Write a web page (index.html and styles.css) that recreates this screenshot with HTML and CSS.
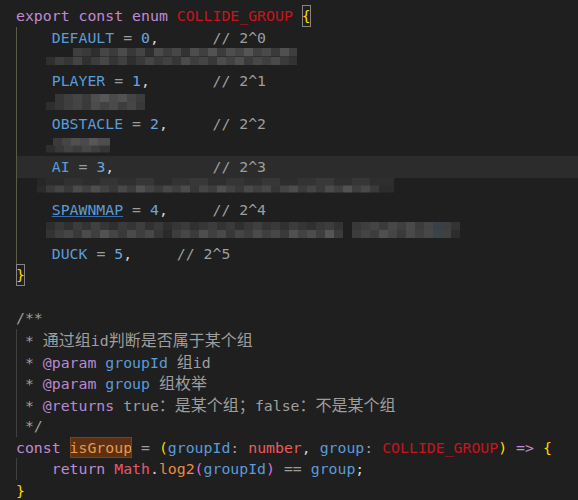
FILE: index.html
```html
<!DOCTYPE html>
<html lang="zh-CN">
<head>
<meta charset="utf-8">
<title>COLLIDE_GROUP</title>
<link rel="stylesheet" href="styles.css">
</head>
<body>
<div class="editor">
<div class="ln"><span class="kw">export</span> <span class="kw">const</span> <span class="kw">enum</span> <span class="ty">COLLIDE_GROUP</span> <span class="br1 match">{</span></div>
<div class="ln g1">    <span class="mem">DEFAULT</span> <span class="op">=</span> <span class="num">0</span><span class="pn">,</span>      <span class="cm">// 2^0</span></div>
<div class="ln g1"><div class="blur b3"></div></div>
<div class="ln g1">    <span class="mem">PLAYER</span> <span class="op">=</span> <span class="num">1</span><span class="pn">,</span>       <span class="cm">// 2^1</span></div>
<div class="ln g1"><div class="blur b5"></div></div>
<div class="ln g1">    <span class="mem">OBSTACLE</span> <span class="op">=</span> <span class="num">2</span><span class="pn">,</span>     <span class="cm">// 2^2</span></div>
<div class="ln g1"><div class="blur b7"></div></div>
<div class="ln g1 cur">    <span class="mem">AI</span> <span class="op">=</span> <span class="num">3</span><span class="pn">,</span>           <span class="cm">// 2^3</span></div>
<div class="ln g1"><div class="blur b9"></div></div>
<div class="ln g1">    <span class="mem ul">SPAWNMAP</span> <span class="op">=</span> <span class="num">4</span><span class="pn">,</span>     <span class="cm">// 2^4</span></div>
<div class="ln g1"><div class="blur b11"></div></div>
<div class="ln g1">    <span class="mem">DUCK</span> <span class="op">=</span> <span class="num">5</span><span class="pn">,</span>     <span class="cm">// 2^5</span></div>
<div class="ln"><span class="br1 match">}</span></div>
<div class="ln"></div>
<div class="ln"><span class="cm">/**</span></div>
<div class="ln g2"><span class="cm"> * <span class="cjk">通过组</span>id<span class="cjk">判断是否属于某个组</span></span></div>
<div class="ln g2"><span class="cm"> * </span><span class="tag">@param</span> <span class="par">groupId</span> <span class="cm"><span class="cjk">组</span>id</span></div>
<div class="ln g2"><span class="cm"> * </span><span class="tag">@param</span> <span class="par">group</span> <span class="cm"><span class="cjk">组枚举</span></span></div>
<div class="ln g2"><span class="cm"> * </span><span class="tag">@returns</span><span class="cm"> true<span class="cjk">：是某个组；</span>false<span class="cjk">：不是某个组</span></span></div>
<div class="ln g2"><span class="cm"> */</span></div>
<div class="ln"><span class="kw">const</span> <span class="fnhl">isGroup</span> <span class="op">=</span> <span class="br1">(</span><span class="mem">groupId</span><span class="op">:</span> <span class="tn">number</span><span class="pn">,</span> <span class="mem">group</span><span class="op">:</span> <span class="ty">COLLIDE_GROUP</span><span class="br1">)</span> <span class="kw">=&gt;</span> <span class="br1">{</span></div>
<div class="ln g2">    <span class="kw">return</span> <span class="cls">Math</span><span class="pn">.</span><span class="fn">log2</span><span class="br2">(</span><span class="mem">groupId</span><span class="br2">)</span> <span class="op">==</span> <span class="mem">group</span><span class="pn">;</span></div>
<div class="ln"><span class="br1">}</span></div>
</div>
</body>
</html>
```
FILE: styles.css
```css
html, body {
  margin: 0;
  padding: 0;
  background: #1f1f1f;
  overflow: hidden;
}

.editor {
  width: 578px;
  height: 500px;
  padding: 5px 0 0 16px;
  box-sizing: border-box;
  font-family: "DejaVu Sans Mono", "Noto Sans CJK SC", monospace;
  font-size: 14.83px;
  line-height: 21.6px;
  color: #d4d4d4;
  overflow: hidden;
}

.ln {
  display: flow-root;
  height: 21.6px;
  white-space: pre;
}

.g1 { box-shadow: inset 1px 0 0 #5b5a47; }
.g2 { box-shadow: inset 1px 0 0 #404040; }

.cur {
  background: #2c2c2c;
}

.cjk {
  font-family: "Noto Sans CJK SC", sans-serif;
  font-size: 16px;
  line-height: 21.6px;
}

.kw { color: #c08bd2; }
.ty { color: #c8141c; }
.mem { color: #5a9bd8; }
.num { color: #6aa8dc; }
.op { color: #9c9c9c; }
.pn { color: #d4d4d4; }
.cm { color: #9e9e9e; }
.tag { color: #b98ad0; }
.par { color: #5a9bd8; }
.tn { color: #ee5a5a; }
.cls { color: #e9586a; }
.fn { color: #ee8a3c; }
.br1 { color: #ffd700; }
.br2 { color: #da70d6; }

.match {
  display: inline-block;
  outline: 1px solid #858585;
  outline-offset: -1px;
}

.ul {
  text-decoration: underline;
  text-decoration-color: #3f6c9c;
  text-underline-offset: 1px;
}

.fnhl {
  color: #e39b4f;
  background: #5e3011;
  outline: 1px solid #7a4219;
  outline-offset: -1px;
  display: inline-block;
}

.blur {
  background-repeat: no-repeat;
}

.b3 {
  margin: 0 0 0 30px;
  width: 251px;
  height: 17px;
  background-image:
    linear-gradient(90deg, #3f3f3f 0 9px, #3a3a3a 9px 18px, #2e2e2e 18px 27px, #464646 27px 36px, #3b3b3b 36px 45px, #4b4b4b 45px 54px, #383838 54px 63px, #444 63px 72px, #2f2f2f 72px 81px, #4a4a4a 81px 90px, #3d3d3d 90px 99px, #474747 99px 108px, #333 108px 117px, #4d4d4d 117px 126px, #404040 126px 135px, #525252 135px 144px, #3c3c3c 144px 153px, #4e4e4e 153px 162px, #454545 162px 171px, #555 171px 180px, #414141 180px 189px, #4a4a4a 189px 198px, #3a3a3a 198px 207px, #505050 207px 216px, #3f3f3f 216px 224px),
    linear-gradient(90deg, #2f2f2f 0 9px, #3d3d3d 9px 18px, #363636 18px 27px, #444 27px 36px, #303030 36px 45px, #3c3c3c 45px 54px, #474747 54px 63px, #353535 63px 72px, #404040 72px 81px, #2e2e2e 81px 90px, #393939 90px 99px, #454545 99px 108px, #3a3a3a 108px 117px, #414141 117px 126px, #363636 126px 135px, #4b4b4b 135px 144px, #3e3e3e 144px 153px, #454545 153px 162px, #383838 162px 171px, #4c4c4c 171px 180px, #424242 180px 189px, #4f4f4f 189px 198px, #3b3b3b 198px 207px, #474747 207px 216px, #3f3f3f 216px 225px, #4a4a4a 225px 234px, #3a3a3a 234px 243px, #333 243px 251px);
  background-position: 27px 0, 0 100%;
  background-size: 224px 50%, 100% 50%;
}

.b5 {
  margin: 2.6px 0 0 30px;
  width: 99px;
  height: 16px;
  background-image:
    linear-gradient(90deg, #363636 0 9px, #3f3f3f 9px 18px, #454545 18px 27px, #3b3b3b 27px 36px, #4e4e4e 36px 45px, #575757 45px 54px, #4a4a4a 54px 63px, #525252 63px 72px, #444 72px 81px, #3c3c3c 81px 90px),
    linear-gradient(90deg, #2e2e2e 0 9px, #363636 9px 18px, #3e3e3e 18px 27px, #444 27px 36px, #3a3a3a 36px 45px, #4c4c4c 45px 54px, #424242 54px 63px, #4a4a4a 63px 72px, #3d3d3d 72px 81px, #464646 81px 90px, #383838 90px 99px);
  background-position: 9px 0, 0 100%;
  background-size: 90px 50%, 100% 50%;
}

.b7 {
  margin: 3.4px 0 0 30px;
  width: 64px;
  height: 15px;
  background-image:
    linear-gradient(90deg, #3a3a3a 0 9px, #454545 9px 18px, #505050 18px 27px, #4a4a4a 27px 36px, #575757 36px 45px, #4e4e4e 45px 57px),
    linear-gradient(90deg, #2e2e2e 0 9px, #383838 9px 18px, #424242 18px 27px, #3c3c3c 27px 36px, #464646 36px 45px, #3e3e3e 45px 54px, #353535 54px 64px);
  background-position: 7px 0, 0 100%;
  background-size: 57px 50%, 100% 50%;
}

.b9 {
  margin: 0 0 0 21px;
  width: 357px;
  height: 15px;
  background-image:
    linear-gradient(90deg, #262626 0 9px, #2b2b2b 9px 27px, #313131 27px 45px, #2d2d2d 45px 63px, #343434 63px 81px, #2f2f2f 81px 99px, #363636 99px 117px, #2c2c2c 117px 135px, #333 135px 153px, #383838 153px 171px, #2e2e2e 171px 189px, #353535 189px 207px, #303030 207px 225px, #373737 225px 243px, #2d2d2d 243px 261px, #333 261px 279px, #393939 279px 297px, #2f2f2f 297px 315px, #363636 315px 333px, #2e2e2e 333px 357px),
    linear-gradient(90deg, #2a2a2a 0 9px, #3a3a3a 9px 18px, #444 18px 27px, #383838 27px 36px, #4a4a4a 36px 45px, #3f3f3f 45px 54px, #4d4d4d 54px 63px, #414141 63px 72px, #373737 72px 81px, #484848 81px 90px, #3c3c3c 90px 99px, #505050 99px 108px, #434343 108px 117px, #3a3a3a 117px 126px, #474747 126px 135px, #3e3e3e 135px 144px, #4b4b4b 144px 153px, #373737 153px 162px, #454545 162px 171px, #3d3d3d 171px 180px, #4f4f4f 180px 189px, #424242 189px 198px, #383838 198px 207px, #494949 207px 216px, #3f3f3f 216px 225px, #474747 225px 234px, #353535 234px 243px, #434343 243px 252px, #4c4c4c 252px 261px, #3b3b3b 261px 270px, #454545 270px 279px, #393939 279px 288px, #4a4a4a 288px 297px, #404040 297px 306px, #525252 306px 315px, #3e3e3e 315px 324px, #484848 324px 333px, #3a3a3a 333px 342px, #2c2c2c 342px 357px);
  background-position: 0 0, 0 100%;
  background-size: 100% 50%, 100% 50%;
}

.b11 {
  margin: 1px 0 0 30px;
  width: 414px;
  height: 16px;
  background-image:
    linear-gradient(90deg, #2e2e2e 0 9px, #383838 9px 18px, #2f2f2f 18px 27px, #3c3c3c 27px 36px, #333 36px 45px, #404040 45px 54px, #363636 54px 63px, #2f2f2f 63px 72px, #3a3a3a 72px 81px, #353535 81px 90px, #3e3e3e 90px 99px, #313131 99px 108px, #393939 108px 117px, #2e2e2e 117px 126px, #363636 126px 135px, #3b3b3b 135px 144px, #303030 144px 153px, #373737 153px 162px, #3d3d3d 162px 171px, #333 171px 180px, #3a3a3a 180px 189px, #2f2f2f 189px 198px, #383838 198px 207px, #3f3f3f 207px 216px, #343434 216px 225px, #393939 225px 234px, #313131 234px 243px, #3c3c3c 243px 252px, #353535 252px 261px, #2f2f2f 261px 270px, #383838 270px 279px, #3d3d3d 279px 288px, #333 288px 297px, #1f1f1f 297px 306px, #383838 306px 315px, #3e3e3e 315px 324px, #444 324px 333px, #3b3b3b 333px 342px, #474747 342px 351px, #3f3f3f 351px 360px, #4a4a4a 360px 369px, #3c3c3c 369px 378px, #454545 378px 387px, #38404a 387px 396px, #3e3e3e 396px 405px, #333 405px 414px),
    linear-gradient(90deg, #333 0 9px, #3e3e3e 9px 18px, #454545 18px 27px, #393939 27px 36px, #4b4b4b 36px 45px, #3f3f3f 45px 54px, #525252 54px 63px, #444 63px 72px, #393939 72px 81px, #4a4a4a 81px 90px, #3e3e3e 90px 99px, #484848 99px 108px, #363636 108px 117px, #2a2a2a 117px 126px, #3d3d3d 126px 135px, #474747 135px 144px, #3b3b3b 144px 153px, #4e4e4e 153px 162px, #404040 162px 171px, #494949 171px 180px, #383838 180px 189px, #454545 189px 198px, #3d3d3d 198px 207px, #4b4b4b 207px 216px, #3f3f3f 216px 225px, #474747 225px 234px, #3a3a3a 234px 243px, #505050 243px 252px, #424242 252px 261px, #4c4c4c 261px 270px, #3e3e3e 270px 279px, #555 279px 288px, #3b3b3b 288px 297px, #1f1f1f 297px 306px, #3c3c3c 306px 315px, #444 315px 324px, #3d3d3d 324px 333px, #4f4f4f 333px 342px, #454545 342px 351px, #3a3a3a 351px 360px, #494949 360px 369px, #3f3f3f 369px 378px, #474747 378px 387px, #3a424c 387px 396px, #404040 396px 405px, #2c2c2c 405px 414px);
  background-position: 0 0, 0 100%;
  background-size: 100% 50%, 100% 50%;
}
```
